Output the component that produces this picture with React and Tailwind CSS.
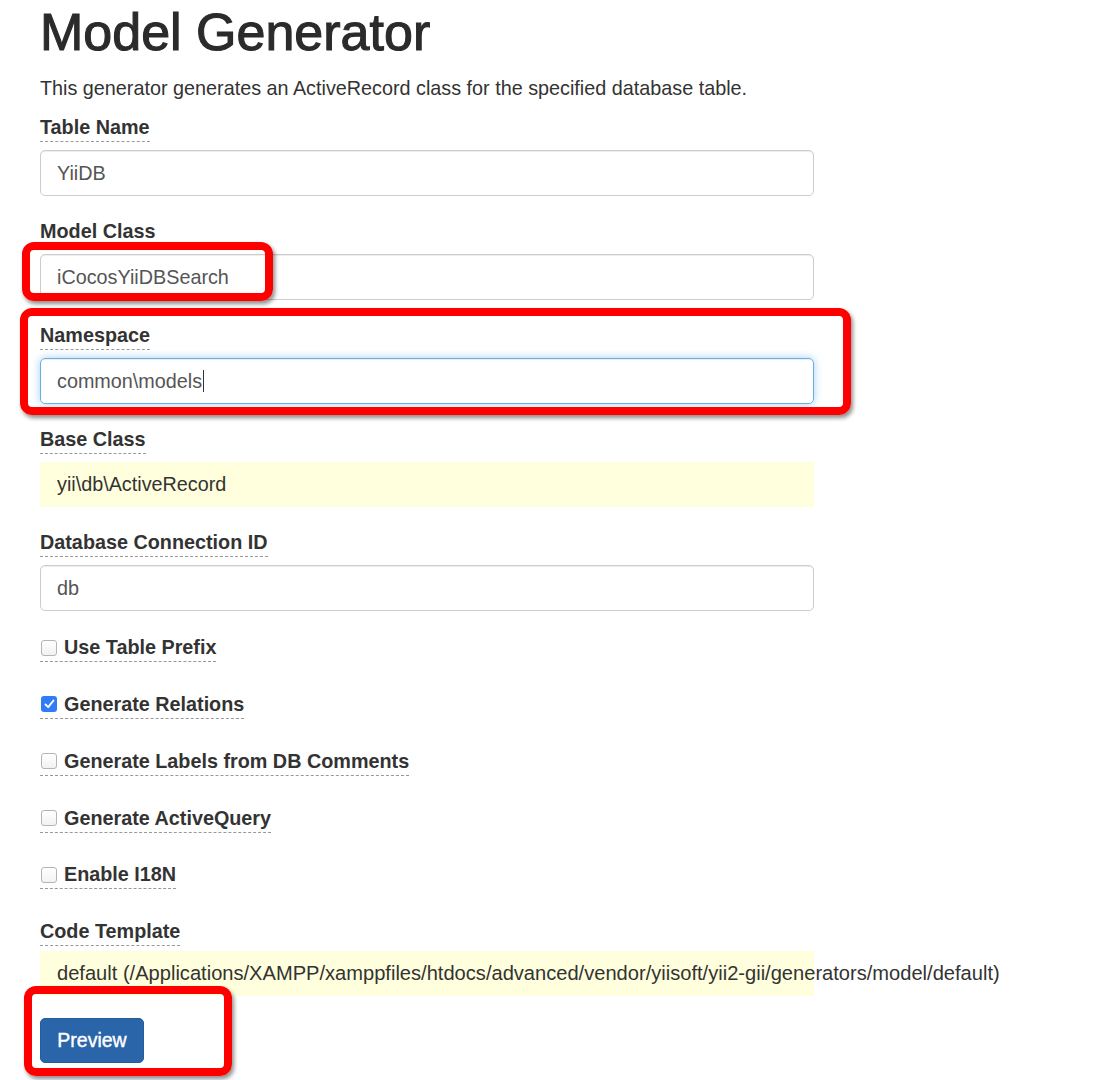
import React from "react";

function Label({ children }) {
  return (
    <div className="flex">
      <label className="font-bold leading-[27px] border-b border-dashed border-[#999]">{children}</label>
    </div>
  );
}

function Field({ label, children, mb = "mb-[22px]", lmb = "mb-[8px]" }) {
  return (
    <div className={mb}>
      <div className={lmb}>
        <Label>{label}</Label>
      </div>
      {children}
    </div>
  );
}

function Input({ children, focused }) {
  return (
    <div
      className={
        "h-[46px] w-[774px] rounded-[5px] border px-[16px] flex items-center text-[#555] " +
        (focused
          ? "border-[#66afe9] shadow-[inset_0_1px_1px_rgba(0,0,0,0.075),0_0_8px_rgba(102,175,233,0.6)]"
          : "border-[#ccc] shadow-[inset_0_1px_1px_rgba(0,0,0,0.075)]")
      }
    >
      {children}
      {focused && <span className="inline-block w-px h-[22px] bg-[#333] ml-px" />}
    </div>
  );
}

function Sticky({ children }) {
  return (
    <div className="h-[45px] w-[774px] bg-[#ffffdd] px-[17px] flex items-center whitespace-nowrap text-[#333]">
      {children}
    </div>
  );
}

function Check({ label, checked }) {
  return (
    <div className="mb-[28.8px] flex">
      <label className="flex items-center font-bold leading-[27px] border-b border-dashed border-[#999]">
        {checked ? (
          <span className="ml-px mr-[7px] w-[16px] h-[16px] rounded-[3px] bg-[#2f7cf6] flex items-center justify-center">
            <svg width="11" height="10" viewBox="0 0 11 10">
              <path d="M1.5 5.5 L4.2 8.2 L9.5 1.5" fill="none" stroke="white" strokeWidth="1.9" strokeLinecap="round" strokeLinejoin="round" />
            </svg>
          </span>
        ) : (
          <span className="ml-px mr-[7px] w-[16px] h-[16px] rounded-[3px] border border-[#b4b4b4] bg-gradient-to-b from-white to-[#f2f2f2]" />
        )}
        {label}
      </label>
    </div>
  );
}

function RedBox({ cls }) {
  return (
    <div
      className={
        "absolute border-[8px] border-[#ff0000] rounded-[12px] shadow-[2px_3px_4px_rgba(0,0,0,0.45)] pointer-events-none " +
        cls
      }
    />
  );
}

export default function App() {
  return (
    <div className="relative min-h-[1080px] w-[1110px] overflow-hidden bg-white pl-[40px] pt-[4px] text-[#333] text-[19.8px] leading-[27px] font-['Liberation_Sans',Arial,sans-serif]">
      <h1 className="m-0 text-[52px] leading-[1.1] text-[#2b2b2b] [-webkit-text-stroke:1.1px_#2b2b2b]">Model Generator</h1>
      <p className="mt-[14px] mb-[12px]">
        This generator generates an ActiveRecord class for the specified database table.
      </p>

      <Field label="Table Name">
        <Input>YiiDB</Input>
      </Field>
      <Field label="Model Class">
        <Input>iCocosYiiDBSearch</Input>
      </Field>
      <Field label="Namespace">
        <Input focused>common\models</Input>
      </Field>
      <Field label="Base Class">
        <Sticky>yii\db\ActiveRecord</Sticky>
      </Field>
      <Field label="Database Connection ID" mb="mb-[23px]">
        <Input>db</Input>
      </Field>

      <Check label="Use Table Prefix" />
      <Check label="Generate Relations" checked />
      <Check label="Generate Labels from DB Comments" />
      <Check label="Generate ActiveQuery" />
      <Check label="Enable I18N" />

      <Field label="Code Template" mb="mb-[22px]" lmb="mb-[5px]">
        <Sticky>
          <span className="text-[20.1px]">default (/Applications/XAMPP/xamppfiles/htdocs/advanced/vendor/yiisoft/yii2-gii/generators/model/default)</span>
        </Sticky>
      </Field>

      <button className="h-[45px] w-[104px] rounded-[5px] border border-[#255c9c] bg-[#2a64a9] text-white text-[19.5px] flex items-center justify-center [-webkit-text-stroke:0.4px_white]">
        Preview
      </button>

      <RedBox cls="left-[22px] top-[242px] w-[251px] h-[59px]" />
      <RedBox cls="left-[20px] top-[308px] w-[831px] h-[107px]" />
      <RedBox cls="left-[24px] top-[986px] w-[208px] h-[90px]" />
    </div>
  );
}
